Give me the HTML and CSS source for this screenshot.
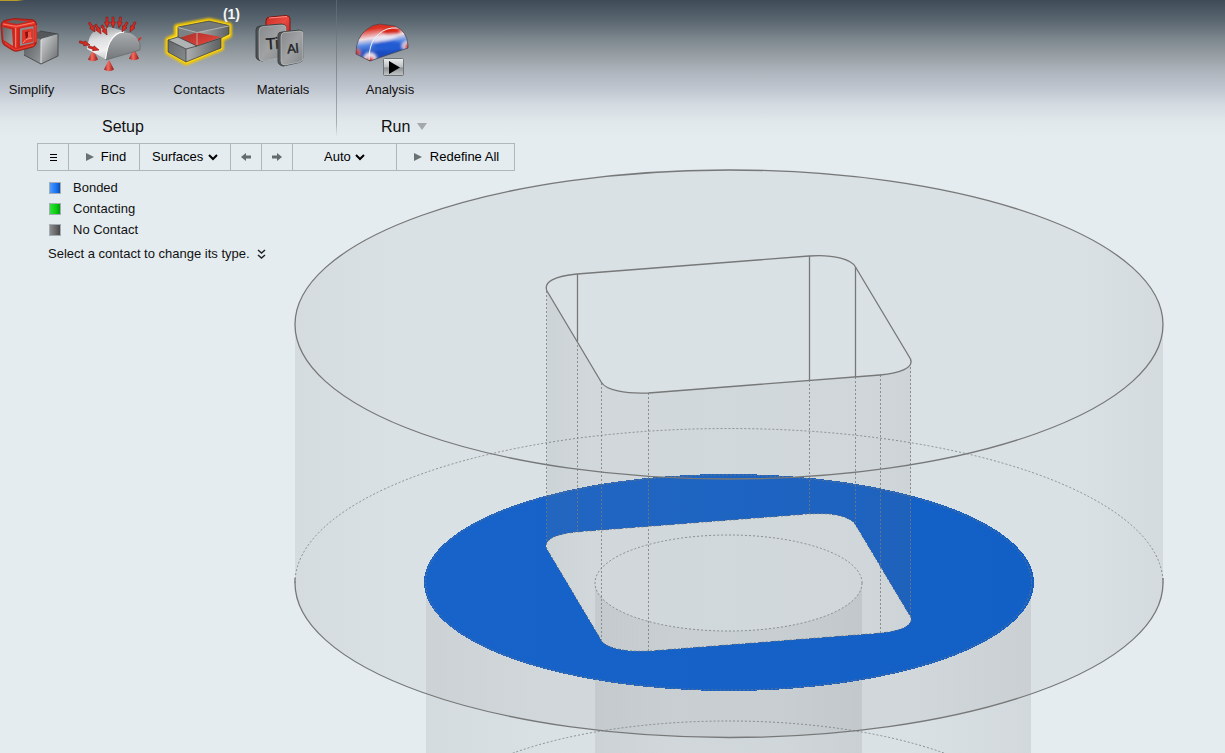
FILE: index.html
```html
<!DOCTYPE html>
<html lang="en">
<head>
<meta charset="utf-8">
<title>Contacts</title>
<link rel="stylesheet" href="styles.css">
</head>
<body>
<svg class="scene" viewBox="0 0 1225 753" preserveAspectRatio="xMidYMid slice" aria-label="Model view">
  <defs>
    <linearGradient id="wall" gradientUnits="userSpaceOnUse" x1="295" y1="0" x2="1163" y2="0">
      <stop offset="0" stop-color="#808080" stop-opacity=".15"/>
      <stop offset=".12" stop-color="#808080" stop-opacity=".1"/>
      <stop offset=".9" stop-color="#808080" stop-opacity=".1"/>
      <stop offset="1" stop-color="#808080" stop-opacity=".16"/>
    </linearGradient>
    <linearGradient id="tunnel" gradientUnits="userSpaceOnUse" x1="546" y1="0" x2="911" y2="0">
      <stop offset="0" stop-color="#788080" stop-opacity=".14"/>
      <stop offset=".12" stop-color="#808080" stop-opacity=".1"/>
      <stop offset=".5" stop-color="#788080" stop-opacity=".09"/>
      <stop offset=".85" stop-color="#787878" stop-opacity=".1"/>
      <stop offset="1" stop-color="#707070" stop-opacity=".12"/>
    </linearGradient>
    <linearGradient id="lower" gradientUnits="userSpaceOnUse" x1="426" y1="0" x2="1031" y2="0">
      <stop offset="0" stop-color="#808080" stop-opacity=".16"/>
      <stop offset=".2" stop-color="#808080" stop-opacity=".1"/>
      <stop offset=".8" stop-color="#808080" stop-opacity=".1"/>
      <stop offset="1" stop-color="#808080" stop-opacity=".18"/>
    </linearGradient>
    <linearGradient id="bore" gradientUnits="userSpaceOnUse" x1="595" y1="0" x2="862" y2="0">
      <stop offset="0" stop-color="#747878" stop-opacity=".14"/>
      <stop offset=".3" stop-color="#808080" stop-opacity=".1"/>
      <stop offset=".7" stop-color="#747878" stop-opacity=".1"/>
      <stop offset="1" stop-color="#747878" stop-opacity=".16"/>
    </linearGradient>
    <linearGradient id="contact" gradientUnits="userSpaceOnUse" x1="424" y1="0" x2="1034" y2="0">
      <stop offset="0" stop-color="#1763ca"/>
      <stop offset="1" stop-color="#125fc5"/>
    </linearGradient>
    <path id="hole" d="M547 291C543 282 555 276 577 274L809 256C835 254 852 260 855.500 267L910.500 359C914 368 900 373 880 375L648.500 393C625 394 606 390 601.500 382.500Z"/>
  </defs>
  <path fill="url(#wall)" d="M295 324A434 155 0 0 1 1163 324V582A434 155 0 0 1 295 582Z"/>
  <path fill="url(#lower)" d="M426 582A303 108 0 0 0 1031 582V753H426Z"/>
  <path fill="url(#bore)" d="M595 583A133.500 48 0 0 0 862 583V753H595Z"/>
  <path fill="url(#contact)" fill-rule="evenodd" shape-rendering="crispEdges" d="M424 582.500A305 108.500 0 0 1 1034 582.500A305 108.500 0 0 1 424 582.500ZM547 549C543 540 555 534 577 532L809 514C835 512 852 518 855.500 525L910.500 617C914 626 900 631 880 633L648.500 651C625 652 606 648 601.500 640.500Z"/>
  <path fill="url(#tunnel)" d="M547 291L601.500 382.500C606 390 625 394 648.500 393L880 375C900 373 913 367 911 360V618C914 626 900 631 880 633L648.500 651C625 652 606 648 601.500 640.500L547 549Z"/>
  <g class="hidden-edge">
    <path d="M295 583A434 154.500 0 0 1 1163 583"/>
    <ellipse cx="728.500" cy="582.500" rx="303" ry="107.500"/>
    <ellipse cx="728.500" cy="583" rx="133.500" ry="48"/>
    <ellipse cx="728.500" cy="829" rx="303" ry="108"/>
    <use href="#hole" y="258"/>
    <path d="M546.500 291V548M577.500 341V532M601.500 383V640M648.500 393V651M809.500 380V514M855.500 377V525M880.500 375V633M910.500 359V617"/>
  </g>
  <g class="edge">
    <ellipse cx="729" cy="324.500" rx="434" ry="154.500"/>
    <path d="M295 578V583A434 154.500 0 0 0 1163 583V578"/>
    <use href="#hole"/>
    <path d="M577.500 274V341M809.500 256V380M855.500 267V377"/>
  </g>
</svg>

<header class="ribbon">
  <section class="group setup">
    <div class="tools">
      <button class="tool" type="button">
        <svg class="icon" width="63" height="80" viewBox="0 0 63 80" aria-hidden="true">
          <defs>
            <linearGradient id="cubeR" x1="0" y1="0" x2="1" y2="1"><stop offset="0" stop-color="#d4d6d7"/><stop offset="1" stop-color="#66696b"/></linearGradient>
            <linearGradient id="cubeL" x1="0" y1="0" x2="1" y2="1"><stop offset="0" stop-color="#55595b"/><stop offset="1" stop-color="#96999b"/></linearGradient>
            <linearGradient id="faceG" x1="0" y1="0" x2="1" y2="1"><stop offset="0" stop-color="#606365"/><stop offset="1" stop-color="#a0a2a4"/></linearGradient>
          </defs>
          <path d="M24 37L41 39V64L24 55Z" fill="url(#cubeL)"/>
          <path d="M24 37L40 31L58 34L41 39Z" fill="#54585b"/>
          <path d="M41 39L58 34V56L41 64Z" fill="url(#cubeR)"/>
          <path d="M41 40V63" stroke="#dfe1e2"/>
          <path d="M24 55L41 64L58 56V34L40 31" fill="none" stroke="#3c4043" stroke-width=".8"/>
          <path d="M1 26Q1 21 6 20L14 18.500L32 19.500Q36 20 36.500 24V42Q36 46 33 47L18 51Q15 52 12 50L4 45Q2 43 2 40Z" fill="#c9251b" stroke="#8f1510" stroke-width=".7"/>
          <path d="M6 22L13 20L29 21.500L17 24Z" fill="#606466"/>
          <path d="M2.500 27L12 29.500L13 46L3.500 40Z" fill="url(#faceG)"/>
          <path d="M3 24L14 26.500Q17 27 20 26L35 23M16 28V48M35.500 25V42" fill="none" stroke="#e8392c" stroke-width="2.500"/>
          <path d="M3 24L14 26Q17 26.500 20 25.500L34 22.500M15.500 28V47" fill="none" stroke="#fb8a7b" stroke-width=".8"/>
          <path d="M5 43L14 49Q16 50 19 49L34 45" fill="none" stroke="#e63e31" stroke-width="1.300"/>
          <path d="M20 28.500L33.500 26V43L20 46Z" fill="#8b8d8f"/>
          <path d="M22 31Q22 30 23 30L32 28.500Q33 28.500 33 30V41Q33 42 32 42L23 44Q22 44 22 43Z" fill="#e03529"/>
          <path d="M25 32L31 31V38L26 40Z" fill="#8c120d"/>
          <path d="M25 40L28 37L28 32L31 31V38Z" fill="#ee5345"/>
          <path d="M23 43L26 39.500L32 38" fill="none" stroke="#ffa195" stroke-width=".8"/>
        </svg>
        <span class="tool-name">Simplify</span>
      </button>
      <button class="tool" type="button">
        <svg class="icon" width="100" height="80" viewBox="63 0 100 80" aria-hidden="true">
          <defs>
            <linearGradient id="arch" x1=".3" y1="0" x2=".5" y2="1"><stop offset="0" stop-color="#9a9ea1"/><stop offset=".35" stop-color="#dcdddf"/><stop offset=".7" stop-color="#f0f0f1"/><stop offset="1" stop-color="#c2c4c6"/></linearGradient>
            <linearGradient id="archF" x1="0" y1="0" x2="0" y2="1"><stop offset="0" stop-color="#a9acae"/><stop offset="1" stop-color="#74777a"/></linearGradient>
            <linearGradient id="cone" x1="0" y1="0" x2="1" y2="0"><stop offset="0" stop-color="#8e1511"/><stop offset=".4" stop-color="#f46d62"/><stop offset="1" stop-color="#8e1511"/></linearGradient>
            <path id="coneShape" d="M0 -5.500Q1 -5.500 1.500 -3.500L5 3.500Q0 7 -5 3.500L-1.500 -3.500Q-1 -5.500 0 -5.500Z" fill="url(#cone)"/>
            <path id="arrow" d="M-1 -11H1V-6H2.500L0 0L-2.500 -6H-1Z" fill="#d92c23" stroke="#8a1712" stroke-width=".6"/>
          </defs>
          <use href="#coneShape" x="93" y="56"/><use href="#coneShape" x="134" y="55"/>
          <path d="M87 49L88 43Q90 32 98 29Q103 27 110 27L127 32Q110 36 107 60Z" fill="url(#arch)"/>
          <path d="M106 60Q107 49 110 43Q115 32 125 32Q137 32 140 44V50Z" fill="url(#archF)" stroke="#5d6164" stroke-width=".6"/>
          <path d="M105.500 59Q107 48 110 42Q115 32 124 32" fill="none" stroke="#fafafa" stroke-width="1.300"/>
          <use href="#coneShape" x="109" y="66"/>
          <use href="#arrow" transform="translate(107 28)"/><use href="#arrow" transform="translate(113 28)"/>
          <use href="#arrow" transform="translate(119 28) rotate(8)"/><use href="#arrow" transform="translate(122 32) rotate(28)"/>
          <use href="#arrow" transform="translate(130 32) rotate(28)"/><use href="#arrow" transform="translate(101 34) rotate(-30)"/>
          <use href="#arrow" transform="translate(95 32) rotate(-32)"/><use href="#arrow" transform="translate(107 35) rotate(-28)"/>
          <use href="#arrow" transform="translate(90 45) rotate(-73)"/><use href="#arrow" transform="translate(99 50) rotate(-73)"/>
          <path d="M138 41L138.500 38.500L141 37L141.500 38L139.500 40.500Z" fill="#d92c23"/>
        </svg>
        <span class="tool-name">BCs</span>
      </button>
      <button class="tool" type="button" aria-pressed="true">
        <svg class="icon" width="72" height="80" viewBox="163 0 72 80" aria-hidden="true">
          <defs>
            <linearGradient id="boxF" x1="0" y1="0" x2="1" y2="0"><stop offset="0" stop-color="#acaeaf"/><stop offset="1" stop-color="#5d6062"/></linearGradient>
            <linearGradient id="boxD" x1="0" y1="0" x2="1" y2="1"><stop offset="0" stop-color="#636668"/><stop offset="1" stop-color="#8a8d8f"/></linearGradient>
            <linearGradient id="touch" x1="0" y1="0" x2="1" y2="1"><stop offset="0" stop-color="#a92e29"/><stop offset="1" stop-color="#ee4a3f"/></linearGradient>
            <filter id="glow" x="-20%" y="-20%" width="140%" height="140%"><feGaussianBlur stdDeviation="1.200"/></filter>
          </defs>
          <path d="M168 40L177 36V27L209 21L229 25.500V35L221 39V48L186 62.500L168 52Z" fill="none" stroke="#f3c800" stroke-width="6" stroke-linejoin="round" filter="url(#glow)"/>
          <path d="M168 40L177 36V27L209 21L229 25.500V35L221 39V48L186 62.500L168 52Z" fill="#8a8d8f" stroke="#ffdb20" stroke-width="2" stroke-linejoin="round"/>
          <path d="M168 40L177 37L198 46L186 49Z" fill="#b0b3b4"/>
          <path d="M168 40L186 49V62L168 52Z" fill="url(#boxD)"/>
          <path d="M186 49L221 38V48L186 62Z" fill="url(#boxF)"/>
          <path d="M178 27L209 21L229 25.500L197 33Z" fill="#75787a"/>
          <path d="M178 27L197 33V46L178 37Z" fill="#7e8183"/>
          <path d="M197 33L229 25.500V34L197 46Z" fill="url(#boxF)"/>
          <path d="M180 37.500L197 32.500L221 37L197 46Z" fill="url(#touch)"/>
          <path d="M178 27L209 21L229 25.500V34L221 38M178 27V37L197 46L221 38V48L186 62L168 52V40L178 37M168 40L186 49L197 46M186 49V62" fill="none" stroke="#34383a" stroke-width=".7"/>
          <path d="M178 27.500L197 32.500L229 26M197 33V45" fill="none" stroke="#c6c8c9" stroke-width=".7"/>
        </svg>
        <span class="badge">(1)</span>
        <span class="tool-name">Contacts</span>
      </button>
      <button class="tool" type="button">
        <svg class="icon" width="96" height="80" viewBox="235 0 96 80" aria-hidden="true">
          <defs>
            <linearGradient id="plate" x1="0" y1="0" x2="1" y2="1"><stop offset="0" stop-color="#85888a"/><stop offset=".5" stop-color="#a0a2a4"/><stop offset="1" stop-color="#85888a"/></linearGradient>
            <linearGradient id="plateR" x1="0" y1="0" x2="1" y2="1"><stop offset="0" stop-color="#c52d25"/><stop offset=".5" stop-color="#ea4a3f"/><stop offset="1" stop-color="#b5221d"/></linearGradient>
          </defs>
          <path d="M266 21Q266 17 270 17L286 15.500Q290 15.500 290 19V34L266 38Z" fill="url(#plateR)" stroke="#7d1713"/>
          <path d="M269 18L287 16.500" stroke="#ff8b80"/>
          <path d="M256 30Q256 26 260 26L281 24Q286 24 286 28V56L262 61Q256 60 256 57Z" fill="#4c5053" stroke="#3d4245"/>
          <path d="M259 31Q259 27 263 26.500L282 25Q286 25 286 28V54Q286 57 283 57.500L263 61Q259 61 259 57Z" fill="url(#plate)" stroke="#c3c5c6" stroke-width=".6"/>
          <text class="symbol" x="266" y="49" transform="rotate(-4 272 45)">Ti</text>
          <path d="M278 35Q278 32 282 32L299 30Q303 30 303 34V58Q303 62 299 62.500L283 66Q278 65 278 61Z" fill="#505457" stroke="#404447"/>
          <path d="M281 37Q281 33 284 32.500L300 31Q303 31 303 34V58Q303 61 300 62L285 65Q281 65 281 61Z" fill="url(#plate)" stroke="#cfd1d2" stroke-width=".6"/>
          <text class="symbol small" x="287" y="53" transform="rotate(-5 292 48)">Al</text>
        </svg>
        <span class="tool-name">Materials</span>
      </button>
    </div>
    <h2 class="group-name">Setup</h2>
  </section>
  <section class="group run">
    <div class="tools">
      <button class="tool" type="button">
        <svg class="icon" width="106" height="80" viewBox="337 0 106 80" aria-hidden="true">
          <defs>
            <linearGradient id="stress" x1=".3" y1="0" x2=".5" y2="1"><stop offset="0" stop-color="#cc1c10"/><stop offset=".2" stop-color="#dd3324"/><stop offset=".4" stop-color="#f1dfe6"/><stop offset=".54" stop-color="#5588e4"/><stop offset=".7" stop-color="#1c4cc0"/><stop offset="1" stop-color="#1b44b0"/></linearGradient>
            <linearGradient id="keycap" x1="0" y1="0" x2="0" y2="1"><stop offset="0" stop-color="#eceeef"/><stop offset=".5" stop-color="#bcbfc1"/><stop offset=".55" stop-color="#8e9193"/><stop offset="1" stop-color="#c4c6c8"/></linearGradient>
            <clipPath id="dome"><path d="M356 53Q356 38 366 30Q373 24 380 24L395 26Q407 31 408 45V48L370 61L356 54Z"/></clipPath>
            <filter id="soft" x="-50%" y="-50%" width="200%" height="200%"><feGaussianBlur stdDeviation="1.500"/></filter>
          </defs>
          <g clip-path="url(#dome)">
            <path d="M350 20H412V65H350Z" fill="url(#stress)"/>
            <g filter="url(#soft)">
              <ellipse cx="391" cy="31" rx="9" ry="4" fill="#d82518"/>
              <ellipse cx="385" cy="38" rx="13" ry="2.500" fill="#eceaf4" transform="rotate(-12 385 38)"/>
              <ellipse cx="388" cy="46" rx="15" ry="5" fill="#205bd2"/>
              <circle cx="370" cy="59" r="7" fill="#eee0ea"/><circle cx="370" cy="61" r="4" fill="#d52116"/>
              <circle cx="356" cy="53" r="5" fill="#e07b80"/><circle cx="408" cy="46" r="6" fill="#dfdce9"/>
              <circle cx="356" cy="53" r="3" fill="#c62018"/><circle cx="409" cy="47" r="4" fill="#cf1e14"/>
            </g>
            <path d="M369 60Q369 45 375 38Q382 29 392 28L399 28" fill="none" stroke="#edf2fb"/>
          </g>
          <path d="M356 53Q356 38 366 30Q373 24 380 24L395 26Q407 31 408 45V48L370 61L356 54Z" fill="none" stroke="#47454d" stroke-width=".7"/>
          <rect x="383.500" y="58.500" width="20" height="17" rx="1" fill="url(#keycap)" stroke="#6e7376"/>
          <path d="M389 61L400 67.500L389 74Z" fill="#000"/>
        </svg>
        <span class="tool-name">Analysis</span>
      </button>
    </div>
    <h2 class="group-name">Run <svg width="10" height="8" viewBox="0 0 10 8" aria-hidden="true"><path d="M0 0H10L5 7Z" fill="#a3a8ab"/></svg></h2>
  </section>
</header>

<main class="panel">
  <div class="toolbar" role="toolbar" aria-label="Contacts">
    <button class="cell menu" type="button" aria-label="Menu"><svg width="7" height="9" viewBox="0 0 7 9" shape-rendering="crispEdges"><path d="M0 1.500H7M0 4.500H7M0 7.500H7" stroke="#000"/></svg></button>
    <button class="cell find" type="button"><svg class="play" width="8" height="8" viewBox="0 0 8 8" aria-hidden="true"><path d="M0 0L8 4L0 8Z"/></svg>Find</button>
    <div class="cell pick surfaces">
      <select aria-label="Entity"><option>Surfaces</option></select>
      <svg class="chevron" width="10" height="7" viewBox="0 0 10 7" aria-hidden="true"><path d="M1 1L5 5L9 1"/></svg>
    </div>
    <button class="cell step" type="button" aria-label="Previous"><svg width="10" height="8" viewBox="0 0 10 8"><path d="M0 4L5 0V2.500H10V5.500H5V8Z"/></svg></button>
    <button class="cell step" type="button" aria-label="Next"><svg width="10" height="8" viewBox="0 0 10 8"><path d="M10 4L5 0V2.500H0V5.500H5V8Z"/></svg></button>
    <div class="cell pick auto">
      <select aria-label="Tolerance"><option>Auto</option></select>
      <svg class="chevron" width="10" height="7" viewBox="0 0 10 7" aria-hidden="true"><path d="M1 1L5 5L9 1"/></svg>
    </div>
    <button class="cell redefine" type="button"><svg class="play" width="8" height="8" viewBox="0 0 8 8" aria-hidden="true"><path d="M0 0L8 4L0 8Z"/></svg>Redefine All</button>
  </div>
  <ul class="legend">
    <li><span class="swatch bonded"></span>Bonded</li>
    <li><span class="swatch contacting"></span>Contacting</li>
    <li><span class="swatch none"></span>No Contact</li>
  </ul>
  <p class="hint">Select a contact to change its type.
    <button class="more" type="button" aria-label="More"><svg width="9" height="11" viewBox="0 0 9 11"><path d="M1 1L4.500 4L8 1M1 6L4.500 9L8 6"/></svg></button>
  </p>
</main>
</body>
</html>
```

FILE: styles.css
```css
* {
  box-sizing: border-box;
}

body {
  margin: 0;
  min-height: 100vh;
  position: relative;
  overflow: hidden;
  background: #e4ecf0;
  color: #111;
  font: 13px/18px "Liberation Sans", Arial, sans-serif;
}

button,
select {
  margin: 0;
  padding: 0;
  border: 0;
  background: none;
  color: inherit;
  font: inherit;
}

svg {
  display: block;
}

/* Model view, behind the ribbon and the panel */
.scene {
  position: absolute;
  inset: 0;
  width: 100%;
  height: 100%;
}

.edge {
  fill: none;
  stroke: #777878;
  stroke-width: 1.3;
}

.hidden-edge {
  fill: none;
  stroke: #777b7d;
  stroke-width: 1;
  stroke-dasharray: 2 2;
  stroke-opacity: 0.8;
}

/* Ribbon */
.ribbon {
  position: relative;
  display: flex;
  padding-bottom: 4px;
  background: linear-gradient(#3f4b56 0, #59656f 20px, #7a858c 38px, #929a9f 52px, #aeb5bd 72px, #c0c6cf 89px, #d4dbe1 105px, #e1e8ec 122px, #e4ecf0 138px);
}

.ribbon::before {
  content: "";
  position: absolute;
  top: 0;
  left: 0;
  width: 24px;
  height: 1px;
  background: linear-gradient(90deg, #b99b27 70%, transparent);
}

.group {
  display: flex;
  flex-direction: column;
}

.setup {
  width: 337px;
  border-right: 1px solid;
  border-image: linear-gradient(#59636b, #7d868d 45%, #a7afb4 90%, #e4ecf0) 1;
}

.tools {
  display: grid;
}

.setup .tools {
  grid-template-columns: 63px 100px 72px 96px;
}

.run .tools {
  grid-template-columns: 106px;
}

.tool {
  position: relative;
  display: flex;
  flex-direction: column;
  align-items: center;
  gap: 1px;
}

.icon {
  overflow: visible;
}

.symbol {
  fill: #202224;
  stroke: #202224;
  stroke-width: 0.4px;
  font: 16px "Liberation Sans", Arial, sans-serif;
}

.symbol.small {
  font-size: 13px;
}

.badge {
  position: absolute;
  top: 5px;
  right: -5px;
  color: #f2f5f7;
  font-size: 14px;
  font-weight: bold;
}

.group-name {
  display: flex;
  align-items: center;
  gap: 7px;
  margin: 17px 0 0;
  padding-top: 1px;
  font-size: 16px;
  line-height: 19px;
  font-weight: normal;
}

.setup .group-name {
  padding-left: 102px;
}

.run .group-name {
  padding-left: 44px;
}

/* Contacts panel */
.panel {
  position: relative;
  padding: 3px 37px;
}

.toolbar {
  display: inline-flex;
  height: 28px;
  border: 1px solid #b0b6ba;
  vertical-align: top;
}

.cell {
  display: flex;
  align-items: center;
  justify-content: center;
  color: #000;
}

.cell + .cell {
  border-left: 1px solid #b0b6ba;
}

.menu {
  width: 30px;
}

.step {
  width: 31px;
  fill: #656a6d;
}

.play {
  fill: #6c7174;
}

.find {
  width: 71px;
  gap: 7px;
  padding-left: 4px;
}

.redefine {
  width: 118px;
  gap: 8px;
  padding-left: 2px;
}

.pick {
  position: relative;
}

.pick select {
  width: 100%;
  height: 100%;
  appearance: none;
}

.chevron {
  position: absolute;
  top: 10px;
  fill: none;
  stroke: #000;
  stroke-width: 2;
  pointer-events: none;
}

.surfaces {
  width: 91px;
}

.surfaces select {
  padding-left: 12px;
}

.surfaces .chevron {
  right: 12px;
}

.auto {
  width: 104px;
}

.auto select {
  padding-left: 31px;
}

.auto .chevron {
  right: 31px;
}

.legend {
  margin: 6px 0 0;
  padding: 0 0 0 12px;
  list-style: none;
}

.legend li {
  display: flex;
  align-items: center;
  gap: 12px;
  line-height: 21px;
}

.swatch {
  width: 12px;
  height: 12px;
  border: 1px solid #a3adb5;
}

.bonded {
  background: linear-gradient(90deg, #4b9bff, #1b74f2 60%, #0b4eae);
}

.contacting {
  background: linear-gradient(90deg, #35e03c, #08cf10 60%, #089a0c);
}

.none {
  background: linear-gradient(90deg, #8c8c8c, #666 60%, #484848);
}

.hint {
  display: flex;
  align-items: center;
  gap: 7px;
  margin: 5px 0 0;
  padding-left: 11px;
}

.more svg {
  fill: none;
  stroke: #222;
  stroke-width: 1.5;
}
```
